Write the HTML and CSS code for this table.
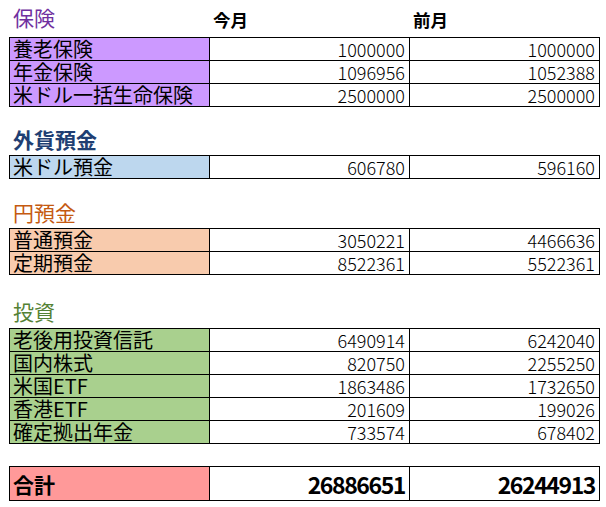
FILE: index.html
```html
<!DOCTYPE html>
<html lang="ja">
<head>
<meta charset="utf-8">
<title>資産一覧</title>
<link rel="stylesheet" href="styles.css">
</head>
<body>
<div class="page">
  <div class="head-row">
    <div class="heading h-purple">保険</div>
    <div class="colhead">今月</div>
    <div class="colhead">前月</div>
  </div>
  <div class="sheet">
    <div class="label bg-purple">養老保険</div><div class="num">1000000</div><div class="num">1000000</div>
    <div class="label bg-purple">年金保険</div><div class="num">1096956</div><div class="num">1052388</div>
    <div class="label bg-purple">米ドル一括生命保険</div><div class="num">2500000</div><div class="num">2500000</div>
  </div>

  <div class="section-head s2"><div class="heading h-blue">外貨預金</div></div>
  <div class="sheet">
    <div class="label bg-blue">米ドル預金</div><div class="num">606780</div><div class="num">596160</div>
  </div>

  <div class="section-head s3"><div class="heading h-orange">円預金</div></div>
  <div class="sheet">
    <div class="label bg-peach">普通預金</div><div class="num">3050221</div><div class="num">4466636</div>
    <div class="label bg-peach">定期預金</div><div class="num">8522361</div><div class="num">5522361</div>
  </div>

  <div class="section-head s4"><div class="heading h-green">投資</div></div>
  <div class="sheet">
    <div class="label bg-green">老後用投資信託</div><div class="num">6490914</div><div class="num">6242040</div>
    <div class="label bg-green">国内株式</div><div class="num">820750</div><div class="num">2255250</div>
    <div class="label bg-green">米国ETF</div><div class="num">1863486</div><div class="num">1732650</div>
    <div class="label bg-green">香港ETF</div><div class="num">201609</div><div class="num">199026</div>
    <div class="label bg-green">確定拠出年金</div><div class="num">733574</div><div class="num">678402</div>
  </div>

  <div class="sheet total">
    <div class="label bg-pink">合計</div><div class="num">26886651</div><div class="num">26244913</div>
  </div>
</div>
</body>
</html>
```
FILE: styles.css
```css
html, body {
  margin: 0;
  padding: 0;
  background: #ffffff;
}
body {
  font-family: "Noto Sans CJK JP", "Noto Sans", sans-serif;
  color: #000;
}
.page {
  width: 606px;
  padding-left: 9px;
  box-sizing: border-box;
}
.head-row {
  display: grid;
  grid-template-columns: 200px 200px 190px;
  margin-left: 1px;
  height: 37px;
}
.heading {
  font-size: 21px;
  line-height: 21px;
  padding-left: 3px;
  white-space: nowrap;
}
.head-row .heading {
  padding-top: 7px;
}
.colhead {
  font-size: 17.5px;
  line-height: 17.5px;
  font-weight: bold;
  padding-top: 11px;
  padding-left: 3px;
}
.h-purple { color: #7030a0; }
.h-blue { color: #1f3f73; font-weight: bold; }
.h-orange { color: #c55a11; }
.h-green { color: #548235; }

.section-head {
  margin-left: 1px;
  box-sizing: border-box;
}
.s2 { height: 48px; padding-top: 22px; }
.s3 { height: 49px; padding-top: 23px; }
.s4 { height: 53px; padding-top: 26px; }

.sheet {
  display: grid;
  grid-template-columns: 200px 200px 190px;
  grid-auto-rows: 23px;
  border-left: 1px solid #000;
  border-top: 1px solid #000;
  width: 591px;
  box-sizing: border-box;
}
.sheet > div {
  border-right: 1px solid #000;
  border-bottom: 1px solid #000;
  box-sizing: border-box;
  line-height: 22px;
  white-space: nowrap;
}
.label {
  font-size: 20px;
  padding-left: 3px;
}
.num {
  font-size: 18px;
  font-weight: 300;
  text-align: right;
  padding-right: 4px;
  color: #000;
}
.bg-purple { background: #cc99ff; }
.bg-blue { background: #bdd7ee; }
.bg-peach { background: #f8cbad; }
.bg-green { background: #a9d08e; }
.bg-pink { background: #ff9999; }

.total {
  margin-top: 22px;
  grid-auto-rows: 34px;
}
.total > div {
  line-height: 34px;
  font-weight: bold;
}
.total .label {
  font-size: 21px;
}
.total .num {
  font-size: 23px;
  font-weight: bold;
  letter-spacing: -1.4px;
  color: #000;
}
```
